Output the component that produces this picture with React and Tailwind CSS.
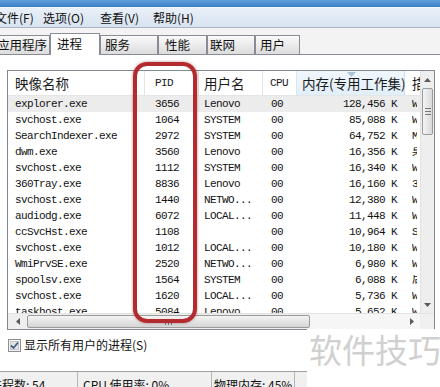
const rows = [
  ["explorer.exe", "3656", "Lenovo", "00", "128,456 K", "W"],
  ["svchost.exe", "1064", "SYSTEM", "00", "85,088 K", "W"],
  ["SearchIndexer.exe", "2972", "SYSTEM", "00", "64,752 K", "M"],
  ["dwm.exe", "3560", "Lenovo", "00", "16,356 K", "桌"],
  ["svchost.exe", "1112", "SYSTEM", "00", "16,340 K", "W"],
  ["360Tray.exe", "8836", "Lenovo", "00", "16,160 K", "3"],
  ["svchost.exe", "1440", "NETWO...", "00", "12,380 K", "W"],
  ["audiodg.exe", "6072", "LOCAL...", "00", "11,448 K", "W"],
  ["ccSvcHst.exe", "1108", "", "00", "10,964 K", "S"],
  ["svchost.exe", "1012", "LOCAL...", "00", "10,180 K", "W"],
  ["WmiPrvSE.exe", "2520", "NETWO...", "00", "6,980 K", "W"],
  ["spoolsv.exe", "1564", "SYSTEM", "00", "6,088 K", "后"],
  ["svchost.exe", "1620", "LOCAL...", "00", "5,736 K", "W"],
  ["taskhost.exe", "5084", "Lenovo", "00", "5,652 K", "W"],
];

const mono = "font-['Liberation_Mono','Noto_Sans_CJK_SC',monospace] text-[11px] tracking-[-0.6px] leading-none";

function Arrow({ dir }) {
  const pts = {
    up: "0,4 3.5,0 7,4",
    down: "0,0 3.5,4 7,0",
    left: "4,0 0,3.5 4,7",
    right: "0,0 4,3.5 0,7",
  }[dir];
  const w = dir === "up" || dir === "down" ? 7 : 4;
  const h = dir === "up" || dir === "down" ? 4 : 7;
  return (
    <svg width={w} height={h} viewBox={`0 0 ${w} ${h}`}>
      <polygon points={pts} fill="#5a5a5a" />
    </svg>
  );
}

export default function App() {
  return (
    <div className="relative w-[440px] h-[387px] overflow-hidden bg-white text-black font-['Noto_Sans_CJK_SC',sans-serif]">
      {/* title strip */}
      <div className="h-[7px] bg-gradient-to-b from-[#5f9fdb] to-[#3a80c4]" />
      {/* menu bar */}
      <div className="h-[21px] flex items-center border-t border-t-[#f4f8fd] border-b border-b-[#a7b4c6] bg-gradient-to-b from-[#e9f0f8] to-[#d8e3f0] text-[12px] text-[#111]">
        <div className="flex -ml-[5px] leading-none">
          <span className="w-[48px]">文件(F)</span>
          <span className="w-[57px]">选项(O)</span>
          <span className="w-[53px]">查看(V)</span>
          <span>帮助(H)</span>
        </div>
      </div>
      {/* tabs */}
      <div className="h-[27px] flex items-end bg-[#f3f3f3] border-b border-[#898c95] text-[12.5px] text-[#111]">
        <div className="flex items-end -mb-px">
          <div className="-ml-[8px] w-[58px] h-[19px] mb-px border border-b-0 border-[#898c95] bg-gradient-to-b from-[#fafafa] to-[#dcdcdc] pl-[4px] leading-[18px]">应用程序</div>
          <div className="w-[50px] h-[22px] border border-b-0 border-[#898c95] bg-white pl-[6px] leading-[19px]">进程</div>
          <div className="w-[58px] h-[19px] mb-px border border-b-0 border-[#898c95] bg-gradient-to-b from-[#fafafa] to-[#dcdcdc] pl-[4px] leading-[18px]">服务</div>
          <div className="w-[49px] h-[19px] mb-px border border-b-0 border-[#898c95] bg-gradient-to-b from-[#fafafa] to-[#dcdcdc] pl-[6px] leading-[18px]">性能</div>
          <div className="w-[48px] h-[19px] mb-px border border-b-0 border-[#898c95] bg-gradient-to-b from-[#fafafa] to-[#dcdcdc] pl-[2px] leading-[18px]">联网</div>
          <div className="w-[45px] h-[19px] mb-px border border-b-0 border-[#898c95] bg-gradient-to-b from-[#fafafa] to-[#dcdcdc] pl-[4px] leading-[18px]">用户</div>
        </div>
      </div>

      {/* panel */}
      <div className="bg-white">
        {/* list box */}
        <div className="ml-[7px] mt-[15px] w-[428px] h-[260px] border border-[#828790] flex flex-col">
          <div className="flex h-[242px]">
            <div className="flex flex-col w-[412px]">
              {/* header */}
              <div className="h-[25px] flex border-b border-[#e5e5e5] text-[13.5px] text-[#1a1a1a]">
                <div className="w-[137px] pl-[7px] flex items-center border-r border-[#e3e3e3]">映像名称</div>
                <div className="w-[54px] pl-[10px] flex items-center border-r border-[#e3e3e3]"><span className={mono}>PID</span></div>
                <div className="w-[64px] pl-[5px] flex items-center border-r border-[#e3e3e3]">用户名</div>
                <div className="w-[34px] pl-[7px] flex items-center border-r border-[#e3e3e3]"><span className={mono}>CPU</span></div>
                <div className="relative w-[108px] pl-[5px] flex items-center border-r border-[#c9dff0] bg-gradient-to-b from-[#f1f8fd] to-[#e0eef9] whitespace-nowrap">
                  内存(专用工作集)
                  <svg className="absolute left-[50px] top-[1px]" width="9" height="5" viewBox="0 0 9 5">
                    <polygon points="0,0 9,0 4.5,5" fill="#a9c3d9" />
                  </svg>
                </div>
                <div className="w-[15px] pl-[7px] flex items-center overflow-hidden whitespace-nowrap">描述</div>
              </div>
              {/* body */}
              <div className="flex-1 overflow-hidden">
                {rows.map((r, i) => (
                  <div key={i} className={`h-[16px] flex items-center text-[#111] ${i === 0 ? "bg-[#ececec]" : ""}`}>
                    <div className={`w-[137px] pl-[7px] ${mono}`}>{r[0]}</div>
                    <div className={`w-[54px] pl-[10px] ${mono}`}>{r[1]}</div>
                    <div className={`w-[64px] pl-[5px] ${mono}`}>{r[2]}</div>
                    <div className={`w-[34px] pl-[8px] ${mono}`}>{r[3]}</div>
                    <div className={`w-[108px] pr-[8px] text-right ${mono}`}>{r[4]}</div>
                    <div className="w-[15px] pl-[7px]">
                      <div className={`w-[5px] overflow-hidden ${mono}`}>{r[5]}</div>
                    </div>
                  </div>
                ))}
              </div>
            </div>
            {/* vertical scrollbar */}
            <div className="w-[14px] flex flex-col bg-[#eeeeee] border-l border-[#e2e2e2]">
              <div className="h-[17px] flex items-center justify-center"><Arrow dir="up" /></div>
              <div className="mx-[1px] h-[47px] rounded-[2px] border border-[#9b9b9b] bg-gradient-to-r from-[#f4f4f4] to-[#d9d9d9] flex flex-col items-center justify-center gap-[2px]">
                <div className="w-[6px] h-px bg-[#777]" />
                <div className="w-[6px] h-px bg-[#777]" />
                <div className="w-[6px] h-px bg-[#777]" />
              </div>
              <div className="flex-1" />
              <div className="h-[17px] flex items-center justify-center"><Arrow dir="down" /></div>
            </div>
          </div>
          {/* horizontal scrollbar */}
          <div className="h-[16px] flex bg-[#eeeeee] border-t border-[#e2e2e2]">
            <div className="w-[19px] flex items-center justify-center"><Arrow dir="left" /></div>
            <div className="w-[283px] my-[1px] rounded-[2px] border border-[#9b9b9b] bg-gradient-to-b from-[#f4f4f4] to-[#d5d5d5] flex items-center justify-center gap-[2px]">
              <div className="w-px h-[6px] bg-[#777]" />
              <div className="w-px h-[6px] bg-[#777]" />
              <div className="w-px h-[6px] bg-[#777]" />
            </div>
            <div className="flex-1 bg-[#f6f6f6]" />
            <div className="w-[16px] flex items-center justify-center bg-[#f6f6f6]"><Arrow dir="right" /></div>
            <div className="w-[14px] bg-[#f0f0f0]" />
          </div>
        </div>

        {/* checkbox */}
        <div className="mt-[8px] h-[14px] flex items-center pl-[8px] text-[12px] text-[#111]">
          <svg width="13" height="13" viewBox="0 0 13 13">
            <rect x="0.5" y="0.5" width="12" height="12" fill="#f4f4f4" stroke="#8e8f8f" />
            <rect x="2.5" y="2.5" width="8" height="8" fill="#e2e4e8" stroke="#c4c6cb" />
            <path d="M3 6.5 L5.5 9 L10 3.5" fill="none" stroke="#4b5e84" strokeWidth="1.8" />
          </svg>
          <span className="ml-[3px] leading-none">显示所有用户的进程(S)</span>
        </div>
      </div>

      {/* status bar */}
      <div className="mt-[19px] h-[20px] border-t border-[#a0a0a0] bg-[#f0f0f0] flex text-[12px] text-[#111]">
        <div className="w-[89px] -ml-[11px] pl-[1px] pt-[5px] leading-[16px] border-r border-[#b5b5b5]">进程数: 54</div>
        <div className="w-[134px] pl-[5px] pt-[5px] leading-[16px] border-r border-[#b5b5b5]">CPU 使用率: 0%</div>
        <div className="w-[83px] pl-[2px] pt-[5px] leading-[16px] border-r border-[#b5b5b5]">物理内存: 45%</div>
      </div>

      {/* red annotation */}
      <div className="absolute left-[133px] top-[62px] w-[64px] h-[261px] rounded-[14px] border-[4px] border-[#b32a2f] shadow-[0_0_3px_rgba(120,20,20,0.5)]" />

      {/* watermark */}
      <div className="absolute left-[307px] top-[329px] right-0 bottom-0 bg-white">
        <div className="pl-[2px] pt-[4px] text-[33px] leading-none text-[#d0d0d0] whitespace-nowrap">软件技巧</div>
      </div>
    </div>
  );
}
